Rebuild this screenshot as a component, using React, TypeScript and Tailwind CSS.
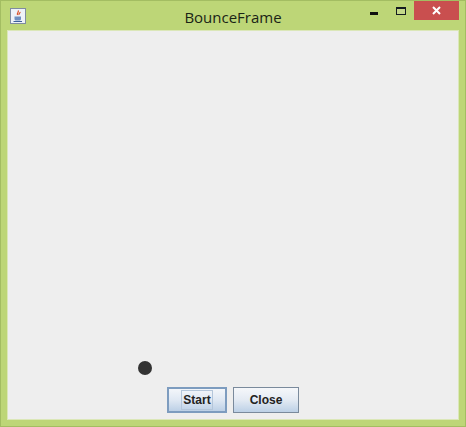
const App = () => {
  return (
    <div className="w-[466px] h-[427px] flex flex-col bg-[#bdd677] border border-[#a3bd62] font-['Segoe_UI','Open_Sans',sans-serif] overflow-hidden">
      {/* Title bar */}
      <div className="h-[29px] flex items-start relative shrink-0">
        <div className="ml-[9px] mt-[7px]">
          <svg width="16" height="16" viewBox="0 0 16 16">
            <rect x="0.5" y="0.5" width="15" height="15" fill="#eef2f8" stroke="#7f8ca0" />
            <path d="M8 2.500c1.500 1.500-1.500 2.500-.5 4.500M10 4c.5 1-1.500 1.500-1 3" stroke="#d9532c" strokeWidth="1.2" fill="none" />
            <path d="M4.500 8.500h6.500v2.500c0 1-1 1.500-2 1.500H6.500c-1 0-2-.5-2-1.500z" fill="#6f8fc0" />
            <path d="M3.500 13.500h8.500" stroke="#3d5f9a" strokeWidth="1" />
          </svg>
        </div>
        <div className="absolute left-0 right-0 top-[6px] text-center text-[15px] leading-[20px] text-[#1a2416]">BounceFrame</div>
        <div className="ml-auto flex items-start">
          <div className="mt-[11px] mr-[18px] w-[8px] h-[3px] bg-[#101010]" />
          <div className="mt-[6px] mr-[8px] w-[10px] h-[8px] border border-t-2 border-[#141c20] bg-[#c4d98a]" />
          <div className="w-[45px] h-[20px] mr-[6px] bg-[#c94f4f] flex items-center justify-center -mt-px">
            <svg width="11" height="11" viewBox="0 0 11 11">
              <path d="M2 2l7 7M9 2l-7 7" stroke="#ffffff" strokeWidth="2" />
            </svg>
          </div>
        </div>
      </div>

      {/* Content */}
      <div className="flex-1 mx-[6px] mb-[6px] border border-[#dbe7b8] bg-[#eeeeee] flex flex-col">
        <div className="flex-1 relative">
          <div className="absolute left-[130px] top-[330px] w-[14px] h-[14px] rounded-full bg-[#333333]" />
        </div>
        <div className="flex justify-center gap-[6px] pb-[6px]">
          <button className="w-[60px] h-[26px] flex items-center justify-center border-2 border-[#7d9cbf] bg-gradient-to-b from-[#f3f6fa] via-[#dfe8f3] to-[#bcd0e6] text-[12px] font-bold text-[#222222] font-['Liberation_Sans',sans-serif]">
            <span className="border border-[#b4c6da] px-px leading-[18px]">Start</span>
          </button>
          <button className="w-[66px] h-[26px] flex items-center justify-center border border-[#7a8a9c] bg-gradient-to-b from-[#f5f7fa] via-[#e3eaf3] to-[#bcd0e6] text-[12px] font-bold text-[#222222] font-['Liberation_Sans',sans-serif]">
            Close
          </button>
        </div>
      </div>
    </div>
  );
};

export default App;
